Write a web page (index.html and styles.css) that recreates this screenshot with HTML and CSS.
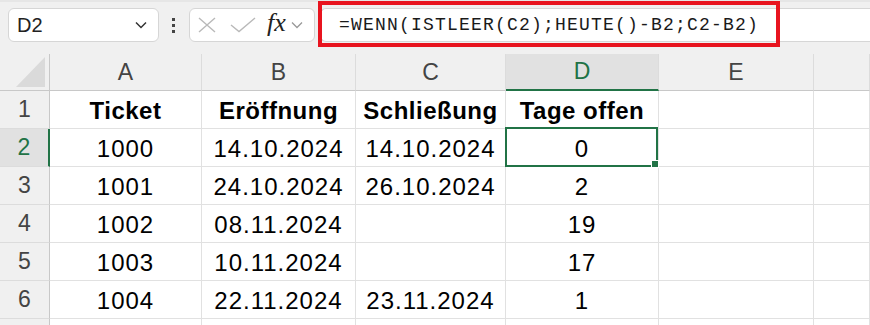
FILE: index.html
```html
<!DOCTYPE html>
<html>
<head>
    <title>Tage offen</title>
    <link rel="stylesheet" href="styles.css">
</head>
<body>
    <div class="toolbar">
        <div class="namebox">
            <span class="ref">D2</span>
            <svg class="chev" width="12" height="8" viewBox="0 0 12 8"><path d="M1 1.5 L6 6.5 L11 1.5" fill="none" stroke="#333" stroke-width="1.5"/></svg>
        </div>
        <div class="dots"><i></i><i></i><i></i></div>
        <div class="fxbox">
            <svg width="20" height="16" viewBox="0 0 20 16"><path d="M2 1 L18 15 M18 1 L2 15" stroke="#b9b9b9" stroke-width="1.4" fill="none"/></svg>
            <svg width="26" height="16" viewBox="0 0 26 16"><path d="M1 8 L9 14.5 L25 1" stroke="#b9b9b9" stroke-width="1.4" fill="none"/></svg>
            <span class="fx">fx</span>
            <svg width="12" height="8" viewBox="0 0 12 8"><path d="M1 1.5 L6 6.5 L11 1.5" fill="none" stroke="#999" stroke-width="1.3"/></svg>
        </div>
        <div class="formula">=WENN(ISTLEER(C2);HEUTE()-B2;C2-B2)</div>
        <div class="mark"></div>
    </div>

    <div class="sheet">
        <div class="corner"><div class="tri"></div></div>
        <div class="colhead">A</div>
        <div class="colhead">B</div>
        <div class="colhead">C</div>
        <div class="colhead active">D</div>
        <div class="colhead">E</div>
        <div class="colhead"></div>

        <div class="rowhead">1</div>
        <div class="cell bold">Ticket</div>
        <div class="cell bold">Eröffnung</div>
        <div class="cell bold">Schließung</div>
        <div class="cell bold">Tage offen</div>
        <div class="cell"></div>
        <div class="cell"></div>

        <div class="rowhead active">2</div>
        <div class="cell">1000</div>
        <div class="cell">14.10.2024</div>
        <div class="cell">14.10.2024</div>
        <div class="cell sel">0<span class="handle"></span></div>
        <div class="cell"></div>
        <div class="cell"></div>

        <div class="rowhead">3</div>
        <div class="cell">1001</div>
        <div class="cell">24.10.2024</div>
        <div class="cell">26.10.2024</div>
        <div class="cell">2</div>
        <div class="cell"></div>
        <div class="cell"></div>

        <div class="rowhead">4</div>
        <div class="cell">1002</div>
        <div class="cell">08.11.2024</div>
        <div class="cell"></div>
        <div class="cell">19</div>
        <div class="cell"></div>
        <div class="cell"></div>

        <div class="rowhead">5</div>
        <div class="cell">1003</div>
        <div class="cell">10.11.2024</div>
        <div class="cell"></div>
        <div class="cell">17</div>
        <div class="cell"></div>
        <div class="cell"></div>

        <div class="rowhead">6</div>
        <div class="cell">1004</div>
        <div class="cell">22.11.2024</div>
        <div class="cell">23.11.2024</div>
        <div class="cell">1</div>
        <div class="cell"></div>
        <div class="cell"></div>

        <div class="rowhead"></div>
        <div class="cell"></div>
        <div class="cell"></div>
        <div class="cell"></div>
        <div class="cell"></div>
        <div class="cell"></div>
        <div class="cell"></div>
    </div>
</body>
</html>
```

FILE: styles.css
```css
html, body {
    margin: 0;
    padding: 0;
    height: 100%;
    overflow: hidden;
}
body {
    background-color: #f0f0f0;
    font-family: "Liberation Sans", Arial, sans-serif;
    color: #000;
}
.toolbar {
    position: relative;
    display: flex;
    align-items: center;
    height: 54px;
    box-sizing: border-box;
    padding: 8px 0 12px 8px;
    background: linear-gradient(#e6e6e6 0, #e6e6e6 2px, #f0f0f0 2px);
}
.namebox {
    display: flex;
    align-items: center;
    justify-content: space-between;
    width: 151px;
    height: 34px;
    box-sizing: border-box;
    padding: 0 11px 0 8px;
    background-color: #fff;
    border: 1px solid #d6d6d6;
    border-radius: 6px;
}
.ref {
    font-size: 20px;
    color: #222;
}
.dots {
    display: flex;
    flex-direction: column;
    gap: 3px;
    margin: 0 14px 0 13px;
}
.dots i {
    display: block;
    width: 3px;
    height: 3px;
    background-color: #444;
}
.fxbox {
    display: flex;
    align-items: center;
    width: 126px;
    height: 34px;
    box-sizing: border-box;
    padding: 0 4px 0 7px;
    background-color: #fff;
    border: 1px solid #d6d6d6;
    border-radius: 6px;
}
.fxbox svg:nth-child(1) { margin-right: 13px; }
.fxbox svg:nth-child(2) { margin-right: 11px; }
.fx {
    font-family: "Liberation Serif", "Times New Roman", serif;
    font-style: italic;
    font-size: 26px;
    color: #222;
    margin-right: 5px;
    margin-top: -4px;
}
.formula {
    flex: 1;
    height: 34px;
    box-sizing: border-box;
    margin-left: 5px;
    padding: 6px 0 0 18px;
    background-color: #fff;
    border: 1px solid #d6d6d6;
    border-right: none;
    border-radius: 6px 0 0 6px;
    font-family: "Liberation Mono", "Courier New", monospace;
    font-size: 18px;
    letter-spacing: 1.2px;
    color: #1a1a1a;
    white-space: nowrap;
}
.mark {
    position: absolute;
    left: 318px;
    top: 1px;
    width: 462px;
    height: 46px;
    box-sizing: border-box;
    border: 4px solid #e8141f;
}
.sheet {
    display: grid;
    grid-template-columns: 50px 152px 154px 150px 153px 155px 1fr;
    grid-template-rows: 37px repeat(7, 38px);
}
.corner {
    position: relative;
    background-color: #f0f0f0;
    border-right: 1px solid #c8c8c8;
    border-bottom: 1px solid #c8c8c8;
}
.tri {
    position: absolute;
    right: 4px;
    bottom: 3px;
    width: 29px;
    height: 30px;
    background-color: #dadada;
    clip-path: polygon(100% 0, 100% 100%, 0 100%);
}
.colhead {
    display: flex;
    align-items: center;
    justify-content: center;
    background-color: #f0f0f0;
    border-right: 1px solid #dcdcdc;
    border-bottom: 1px solid #c8c8c8;
    font-size: 23px;
    color: #444;
}
.colhead.active {
    background-color: #e1e1e1;
    color: #217346;
    border-bottom: 2px solid #217346;
}
.rowhead {
    display: flex;
    align-items: center;
    justify-content: center;
    background-color: #f0f0f0;
    border-right: 1px solid #c8c8c8;
    border-bottom: 1px solid #dcdcdc;
    font-size: 23px;
    color: #444;
}
.rowhead.active {
    background-color: #e1e1e1;
    color: #217346;
    border-right: 2px solid #217346;
}
.cell {
    position: relative;
    display: flex;
    align-items: center;
    justify-content: center;
    background-color: #fff;
    border-right: 1px solid #e1e1e1;
    border-bottom: 1px solid #e1e1e1;
    font-size: 24px;
    letter-spacing: 1px;
    padding-top: 2px;
    box-sizing: border-box;
}
.cell.bold {
    font-weight: bold;
    letter-spacing: 0.5px;
}
.cell.sel::after {
    content: "";
    position: absolute;
    top: -2px;
    left: -1px;
    right: 0;
    bottom: -1px;
    border: 2px solid #217346;
}
.handle {
    position: absolute;
    right: -1px;
    bottom: -2px;
    width: 6px;
    height: 6px;
    background-color: #217346;
    border: 1px solid #fff;
    z-index: 2;
}
```
